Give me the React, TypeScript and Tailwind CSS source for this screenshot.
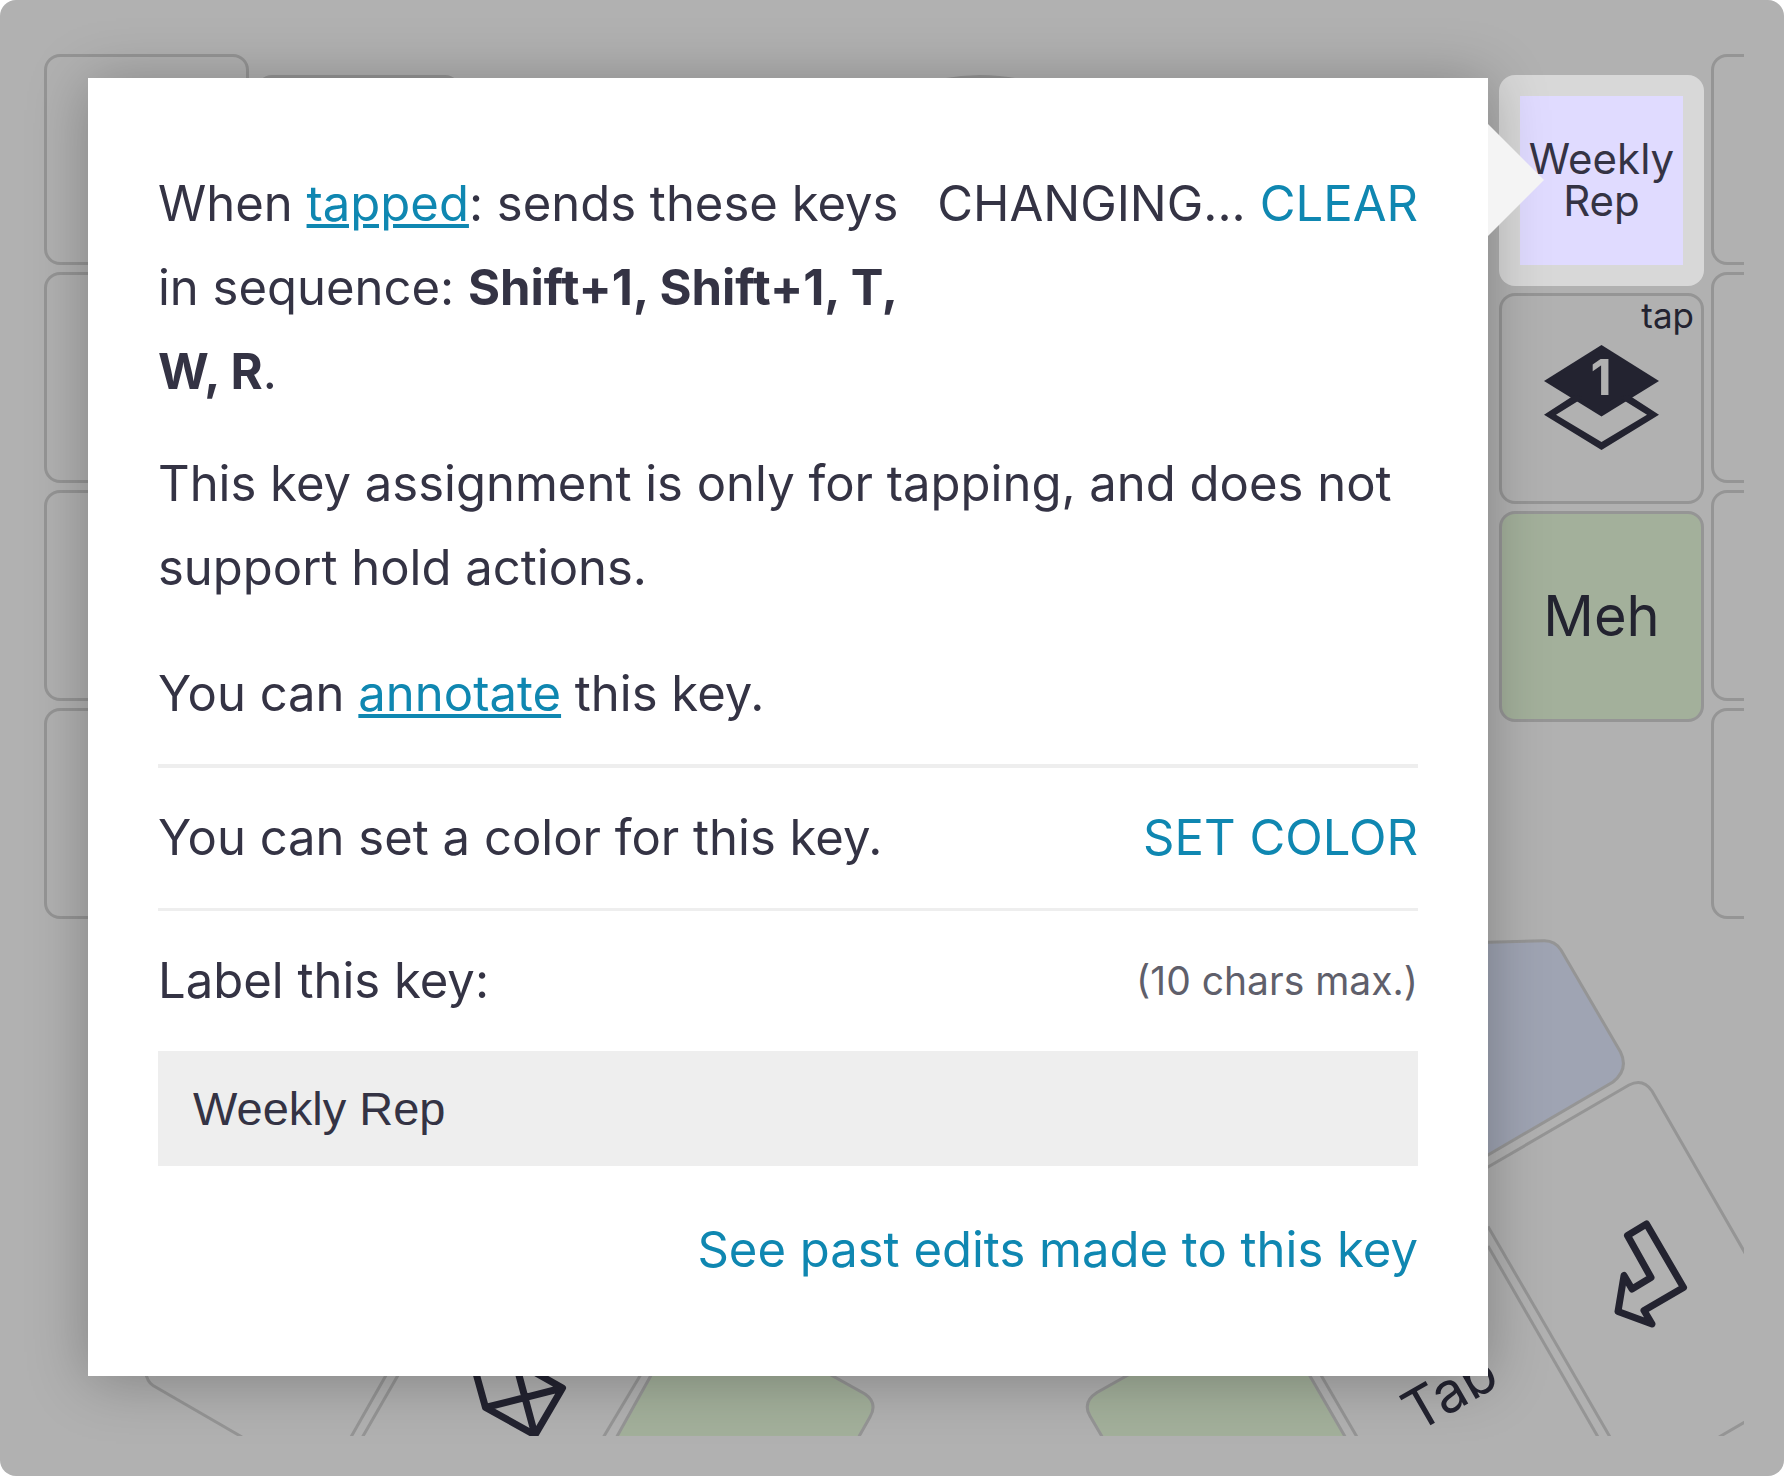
import type { ReactNode } from "react";

const KEY = "h-[211px] w-[205px] shrink-0 rounded-2xl border-[3px] border-[#959595]";

function Key({ className = "", children }: { className?: string; children?: ReactNode }) {
  return <div className={`${KEY} ${className}`}>{children}</div>;
}

function BlankColumn() {
  return (
    <div className="flex shrink-0 flex-col gap-[7px] pt-[14px]">
      <Key />
      <Key />
      <Key />
      <Key />
    </div>
  );
}

function LayerIcon() {
  return (
    <svg viewBox="0 0 115 105" className="h-[105px] w-[115px]" fill="#232330">
      <path d="M57.5 0 115 36 57.5 71.500 0 36Z" />
      <path d="M32 49 0 69.700 57.500 105 115 69.700 83 49 76 53 103 69.700 57.500 97 12 69.700 39 53Z" />
      <text x="57" y="50" textAnchor="middle" fontSize="49" fontWeight="700" fill="#b1b1b1">
        1
      </text>
    </svg>
  );
}

function ThumbCluster() {
  return (
    <svg
      viewBox="40 876 1704 560"
      className="absolute bottom-0 left-0 h-[560px] w-[1704px]"
      fill="none"
      stroke="#959595"
      strokeWidth="3"
    >
      <path
        fill="#9fa4b3"
        d="M1400 944 1488 942.300 1544 940.700Q1555 940.500 1561 950L1620.500 1052Q1629 1069 1613 1082L1488 1155 1400 1206Z"
      />
      <path d="M1400 1218 1488 1167 1629 1085Q1643 1078 1652 1091L1714 1199 1775 1305M1488 1226.500 1610 1437M1719 1437 1745 1422" />
      <path d="M1488 1246 1598 1437" />
      <path d="M145 1370Q147 1382 153 1385.500L242 1437" />
      <path d="M389 1370 351 1437M401 1370 362.500 1437" />
      <path d="M643.500 1370 603.500 1437" />
      <path
        fill="#a3b09b"
        d="M654 1370 615 1440H857L870 1417Q878 1403 865 1394L822 1370Z"
      />
      <path
        fill="#a3b09b"
        d="M1137 1370 1097 1392.500Q1082 1402 1090 1416L1104 1440H1347L1306.500 1370Z"
      />
      <path d="M1318 1370 1357 1437" />
      <g stroke="#232330" strokeWidth="7" strokeLinejoin="round">
        <path d="M474 1366 485.500 1407.500 535 1435 562.500 1388 520 1364M485.500 1407.500 562.500 1388M516.500 1366 535 1435" />
        <path d="M1646.500 1224 1627.500 1235.500 1651 1277.500 1632 1289 1624 1275.500 1618 1311.500 1652 1324 1644 1310.500 1683.500 1287.500Z" />
      </g>
      <text
        transform="translate(1417 1433) rotate(-30)"
        fontSize="56"
        fill="#232330"
        stroke="none"
      >
        Tab
      </text>
    </svg>
  );
}

function Keyboard() {
  return (
    <section
      aria-label="Keyboard layout"
      className="relative m-10 flex flex-1 gap-[7px] overflow-hidden pl-1 text-[#232330]"
    >
      <BlankColumn />
      <div className="flex flex-1 items-start justify-between pt-[35px] pr-[312px]">
        <Key />
        <div className="size-[400px] rounded-full border-[3px] border-[#959595]" />
      </div>
      <div className="flex shrink-0 flex-col gap-[7px] pt-[35px]">
        <div className="flex h-[211px] w-[205px] rounded-2xl bg-[#d8d8d8] p-[21px]">
          <div className="flex flex-1 items-center justify-center bg-[#e0dbff] pb-0.5 text-center text-[42px] leading-[42px] text-[#343344]">
            Weekly
            <br />
            Rep
          </div>
        </div>
        <Key className="relative flex items-center justify-center pb-0.5">
          <span className="absolute -top-0.5 right-[7px] text-[35px] leading-[42px]">tap</span>
          <LayerIcon />
        </Key>
        <Key className="flex items-center justify-center bg-[#a3b09b] pb-0.5 text-[56px]">Meh</Key>
      </div>
      <div className="-mr-[172px]">
        <BlankColumn />
      </div>
      <ThumbCluster />
    </section>
  );
}

const LINK = "cursor-pointer text-[#0f87b1]";

function KeyDialog() {
  return (
    <div
      role="dialog"
      aria-label="Key settings"
      className="absolute top-[78px] right-[296px] left-[88px] bg-white px-[70px] py-[84px] text-[49px] leading-[84px] text-[#343344] shadow-[0_4px_56px_rgba(0,0,0,0.27)]"
    >
      <div className="absolute top-[46px] left-full h-[112px] w-14 bg-[#f4f4f4] [clip-path:polygon(0_0,100%_50%,0_100%)]" />
      <div className="flex items-start justify-between gap-7">
        <p className="flex-1">
          When <a href="#tapped" className={`${LINK} underline`}>tapped</a>: sends these keys in
          sequence: <b className="font-bold">Shift+1, Shift+1, T, W, R</b>.
        </p>
        <div className="flex shrink-0 gap-[14px]">
          <span>CHANGING...</span>
          <button type="button" className={LINK}>CLEAR</button>
        </div>
      </div>
      <p className="mt-7">
        This key assignment is only for tapping, and does not support hold actions.
      </p>
      <p className="mt-[42px] border-b-[4px] border-[#eeeeee] pb-7">
        You can <a href="#annotate" className={`${LINK} underline`}>annotate</a> this key.
      </p>
      <div className="flex justify-between border-b-[3px] border-[#eeeeee] py-7">
        <p>You can set a color for this key.</p>
        <button type="button" className={LINK}>SET COLOR</button>
      </div>
      <div className="mt-7 flex justify-between">
        <label htmlFor="key-label">Label this key:</label>
        <span className="text-[39px] text-[#5f5f6b]">(10 chars max.)</span>
      </div>
      <input
        id="key-label"
        type="text"
        maxLength={10}
        defaultValue="Weekly Rep"
        className="mt-7 block h-[115px] w-full bg-[#eeeeee] px-[35px] font-['Liberation_Sans',Arial,sans-serif] text-[47px] outline-none"
      />
      <div className="mt-[42px] text-right">
        <a href="#history" className={LINK}>See past edits made to this key</a>
      </div>
    </div>
  );
}

export default function App() {
  return (
    <div className="bg-white">
      <main className="relative flex min-h-screen flex-col overflow-hidden rounded-2xl bg-[#b1b1b1] font-['Inter',sans-serif] [font-optical-sizing:none]">
        <Keyboard />
        <KeyDialog />
      </main>
    </div>
  );
}
